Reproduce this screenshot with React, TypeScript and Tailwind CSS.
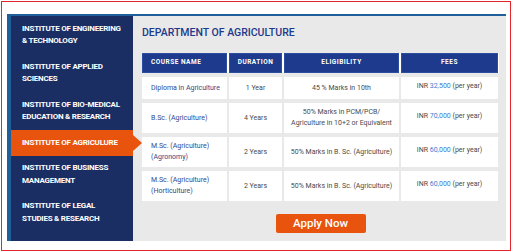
const institutes = [
  { name: "INSTITUTE OF ENGINEERING & TECHNOLOGY" },
  { name: "INSTITUTE OF APPLIED SCIENCES" },
  { name: "INSTITUTE OF BIO-MEDICAL EDUCATION & RESEARCH" },
  { name: "INSTITUTE OF AGRICULURE", active: true },
  { name: "INSTITUTE OF BUSINESS MANAGEMENT" },
  { name: "INSTITUTE OF LEGAL STUDIES & RESEARCH" },
];

const courses = [
  {
    name: ["Diploma in Agriculture"],
    duration: "1 Year",
    eligibility: ["45 % Marks in 10th"],
    fee: "32,500",
  },
  {
    name: ["B.Sc. (Agriculture)"],
    duration: "4 Years",
    eligibility: ["50% Marks in PCM/PCB/", "Agriculture in 10+2 or Equivalent"],
    fee: "70,000",
  },
  {
    name: ["M.Sc. (Agriculture)", "(Agronomy)"],
    duration: "2 Years",
    eligibility: ["50% Marks in B. Sc. (Agriculture)"],
    fee: "60,000",
  },
  {
    name: ["M.Sc. (Agriculture)", "(Horticulture)"],
    duration: "2 Years",
    eligibility: ["50% Marks in B. Sc. (Agriculture)"],
    fee: "60,000",
  },
];

const cols = "grid grid-cols-[85px_53px_115px_97px] gap-x-[2px]";

function Sidebar() {
  return (
    <ul className="w-[122px] shrink-0 bg-[#1b2e63]">
      {institutes.map((it) => (
        <li
          key={it.name}
          className={
            it.active
              ? "relative bg-[#e8540d] py-[6.5px] pl-[11px] pr-[6px] text-[8px] leading-[12.5px] font-bold tracking-[-0.25px] text-white"
              : "py-[6.5px] pl-[11px] pr-[6px] text-[8px] leading-[12.5px] font-bold tracking-[-0.25px] text-white"
          }
        >
          {it.name}
          {it.active && (
            <span className="absolute left-full top-1/2 -translate-y-1/2 border-y-[8px] border-l-[9px] border-y-transparent border-l-[#e8540d]" />
          )}
        </li>
      ))}
    </ul>
  );
}

function CourseTable() {
  return (
    <div className="flex flex-col gap-y-[4px]">
      <div className={`${cols} h-[20px] bg-white`}>
        <div className="flex items-center border border-[#2d4d9e] bg-[#1d3a8c] pl-[8px] text-[6.5px] font-bold tracking-[0.5px] text-white">
          COURSE NAME
        </div>
        {["DURATION", "ELIGIBILITY", "FEES"].map((h) => (
          <div
            key={h}
            className="flex items-center justify-center border border-[#2d4d9e] bg-[#1d3a8c] text-[6.5px] font-bold tracking-[0.5px] text-white"
          >
            {h}
          </div>
        ))}
      </div>
      {courses.map((c, i) => (
        <div key={i} className={`${cols} ${i === 0 ? "h-[22px]" : "h-[30px]"}`}>
          <div className="flex flex-col justify-center bg-white pl-[9px] text-[7px] leading-[11px] text-[#34488a]">
            {c.name.map((l) => (
              <span key={l}>{l}</span>
            ))}
          </div>
          <div className="flex items-center justify-center bg-white text-[7px] text-[#4a4a4a]">
            {c.duration}
          </div>
          <div className="flex flex-col items-center justify-center bg-white text-[7px] leading-[10.7px] text-[#4a4a4a]">
            {c.eligibility.map((l) => (
              <span key={l}>{l}</span>
            ))}
          </div>
          <div className="flex items-center justify-center bg-white pb-[4px] text-[7px] text-[#4a4a4a]">
            <span>
              INR <span className="text-[#3b7bd6]">{c.fee}</span> (per year)
            </span>
          </div>
        </div>
      ))}
    </div>
  );
}

export default function App() {
  return (
    <div className="h-[252px] w-[512px] bg-white p-px font-['Roboto',sans-serif]">
      <div className="flex h-full flex-col border border-[#e2262c] pb-[9px] pl-[5px] pr-[4px] pt-[12px]">
        <div className="flex flex-1 border-l-[4px] border-t-[2px] border-[#1f5f9a]">
          <Sidebar />
          <div className="flex flex-1 flex-col bg-[#e9e9e9] pl-[9px] pr-[7px] pt-[10px]">
            <h2 className="mb-[13px] text-[10.5px] font-medium leading-[14px] text-[#21398a]">
              DEPARTMENT OF AGRICULTURE
            </h2>
            <CourseTable />
            <div className="mt-[13px] flex justify-center">
              <button className="h-[19px] w-[90px] rounded-[2px] bg-[#e8530e] text-[11.5px] font-medium text-white">
                Apply Now
              </button>
            </div>
          </div>
        </div>
      </div>
    </div>
  );
}
